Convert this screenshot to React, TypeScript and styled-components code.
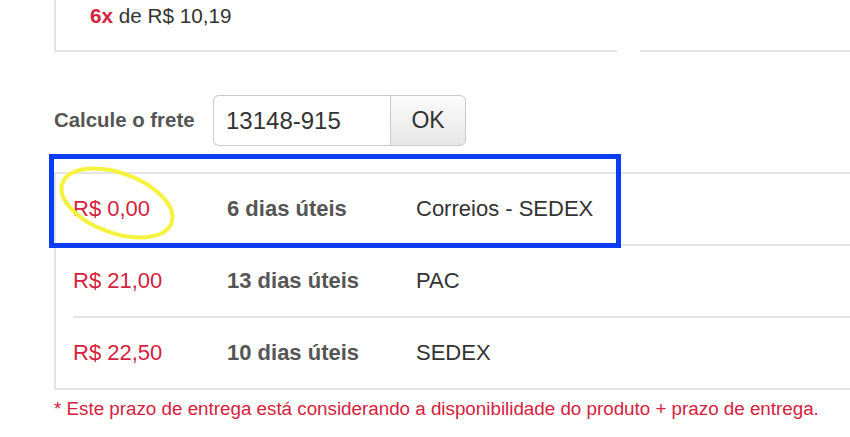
import styled, { createGlobalStyle } from "styled-components";

interface Frete {
  price: string;
  prazo: string;
  servico: string;
}

const fretes: Frete[] = [
  { price: "R$ 0,00", prazo: "6 dias úteis", servico: "Correios - SEDEX" },
  { price: "R$ 21,00", prazo: "13 dias úteis", servico: "PAC" },
  { price: "R$ 22,50", prazo: "10 dias úteis", servico: "SEDEX" },
];

const GlobalStyle = createGlobalStyle`
  html, body {
    margin: 0;
    padding: 0;
    background: #fff;
    overflow: hidden;
  }
  body {
    font-family: "Liberation Sans", Arial, sans-serif;
  }
`;

const App = () => {
  return (
    <Page>
      <GlobalStyle />
      <TopSection>
        <Parcelas>
          <Vezes>6x</Vezes> de R$ 10,19
        </Parcelas>
        <TopRight />
      </TopSection>

      <FreteForm onSubmit={(e) => e.preventDefault()}>
        <FreteLabel>Calcule o frete</FreteLabel>
        <CepInput type="text" defaultValue="13148-915" />
        <OkButton type="submit">OK</OkButton>
      </FreteForm>

      <FreteTable>
        {fretes.map((item, index) => (
          <FreteRow key={index}>
            <Price>{item.price}</Price>
            <Prazo>{item.prazo}</Prazo>
            <Servico>{item.servico}</Servico>
          </FreteRow>
        ))}
      </FreteTable>

      <Aviso>
        * Este prazo de entrega está considerando a disponibilidade do produto +
        prazo de entrega.
      </Aviso>

      {/* marcações feitas no print */}
      <BlueMark />
      <YellowMark width="130" height="80" viewBox="0 0 130 80">
        <ellipse
          cx="65"
          cy="40"
          rx="58"
          ry="30"
          transform="rotate(20 65 40)"
          fill="none"
          stroke="#f6f33f"
          strokeWidth="4"
        />
      </YellowMark>
    </Page>
  );
};

const Page = styled.main`
  position: relative;
  width: 850px;
  height: 437px;
  padding-left: 54px;
  box-sizing: border-box;
  overflow: hidden;
`;

// parcelamento
const TopSection = styled.section`
  display: flex;
  height: 52px;
`;

const Parcelas = styled.div`
  width: 563px;
  box-sizing: border-box;
  padding: 4px 0 0 34px;
  border-left: 2px solid #e4e4e4;
  border-bottom: 2px solid #e4e4e4;
  font-size: 20.7px;
  line-height: 24px;
  color: #333;
`;

const Vezes = styled.b`
  color: #d42241;
`;

const TopRight = styled.div`
  flex: 1;
  margin-left: 23px;
  border-bottom: 2px solid #e4e4e4;
`;

// calculo do frete
const FreteForm = styled.form`
  display: flex;
  align-items: center;
  margin: 43px 0 0;
  height: 51px;
`;

const FreteLabel = styled.label`
  width: 159px;
  font-size: 20.4px;
  font-weight: bold;
  color: #555;
`;

const CepInput = styled.input`
  width: 177px;
  height: 51px;
  box-sizing: border-box;
  padding: 0 0 0 12px;
  border: 1px solid #cacaca;
  border-right: none;
  border-radius: 6px 0 0 6px;
  font-family: "Liberation Sans", Arial, sans-serif;
  font-size: 24px;
  color: #333;
  outline: none;
`;

const OkButton = styled.button`
  width: 76px;
  height: 51px;
  box-sizing: border-box;
  border: 1px solid #cacaca;
  border-radius: 0 6px 6px 0;
  background: linear-gradient(#fbfbfb, #e7e7e7);
  font-family: "Liberation Sans", Arial, sans-serif;
  font-size: 23px;
  color: #333;
  cursor: pointer;
`;

// tabela de fretes
const FreteTable = styled.section`
  margin-top: 26px;
  width: calc(100% + 12px);
  border-top: 2px solid #e4e4e4;
  border-left: 2px solid #e4e4e4;
  border-bottom: 2px solid #e4e4e4;
`;

const FreteRow = styled.div`
  display: grid;
  grid-template-columns: 154px 189px 1fr;
  align-items: center;
  height: 72px;
  box-sizing: border-box;
  margin-left: 17px;
  border-bottom: 2px solid #e4e4e4;
  font-size: 22px;
  &:last-child {
    height: 70px;
    border-bottom: none;
  }
`;

const Price = styled.span`
  color: #d42241;
`;

const Prazo = styled.span`
  font-weight: bold;
  color: #555;
`;

const Servico = styled.span`
  color: #333;
`;

const Aviso = styled.p`
  margin: 9px 0 0;
  font-size: 18.8px;
  line-height: 20px;
  color: #d42241;
  white-space: nowrap;
`;

// anotações por cima
const BlueMark = styled.div`
  position: absolute;
  left: 49px;
  top: 154px;
  width: 572px;
  height: 94px;
  box-sizing: border-box;
  border: 5px solid #0b3cf6;
`;

const YellowMark = styled.svg`
  position: absolute;
  left: 52px;
  top: 163px;
`;

export default App;
